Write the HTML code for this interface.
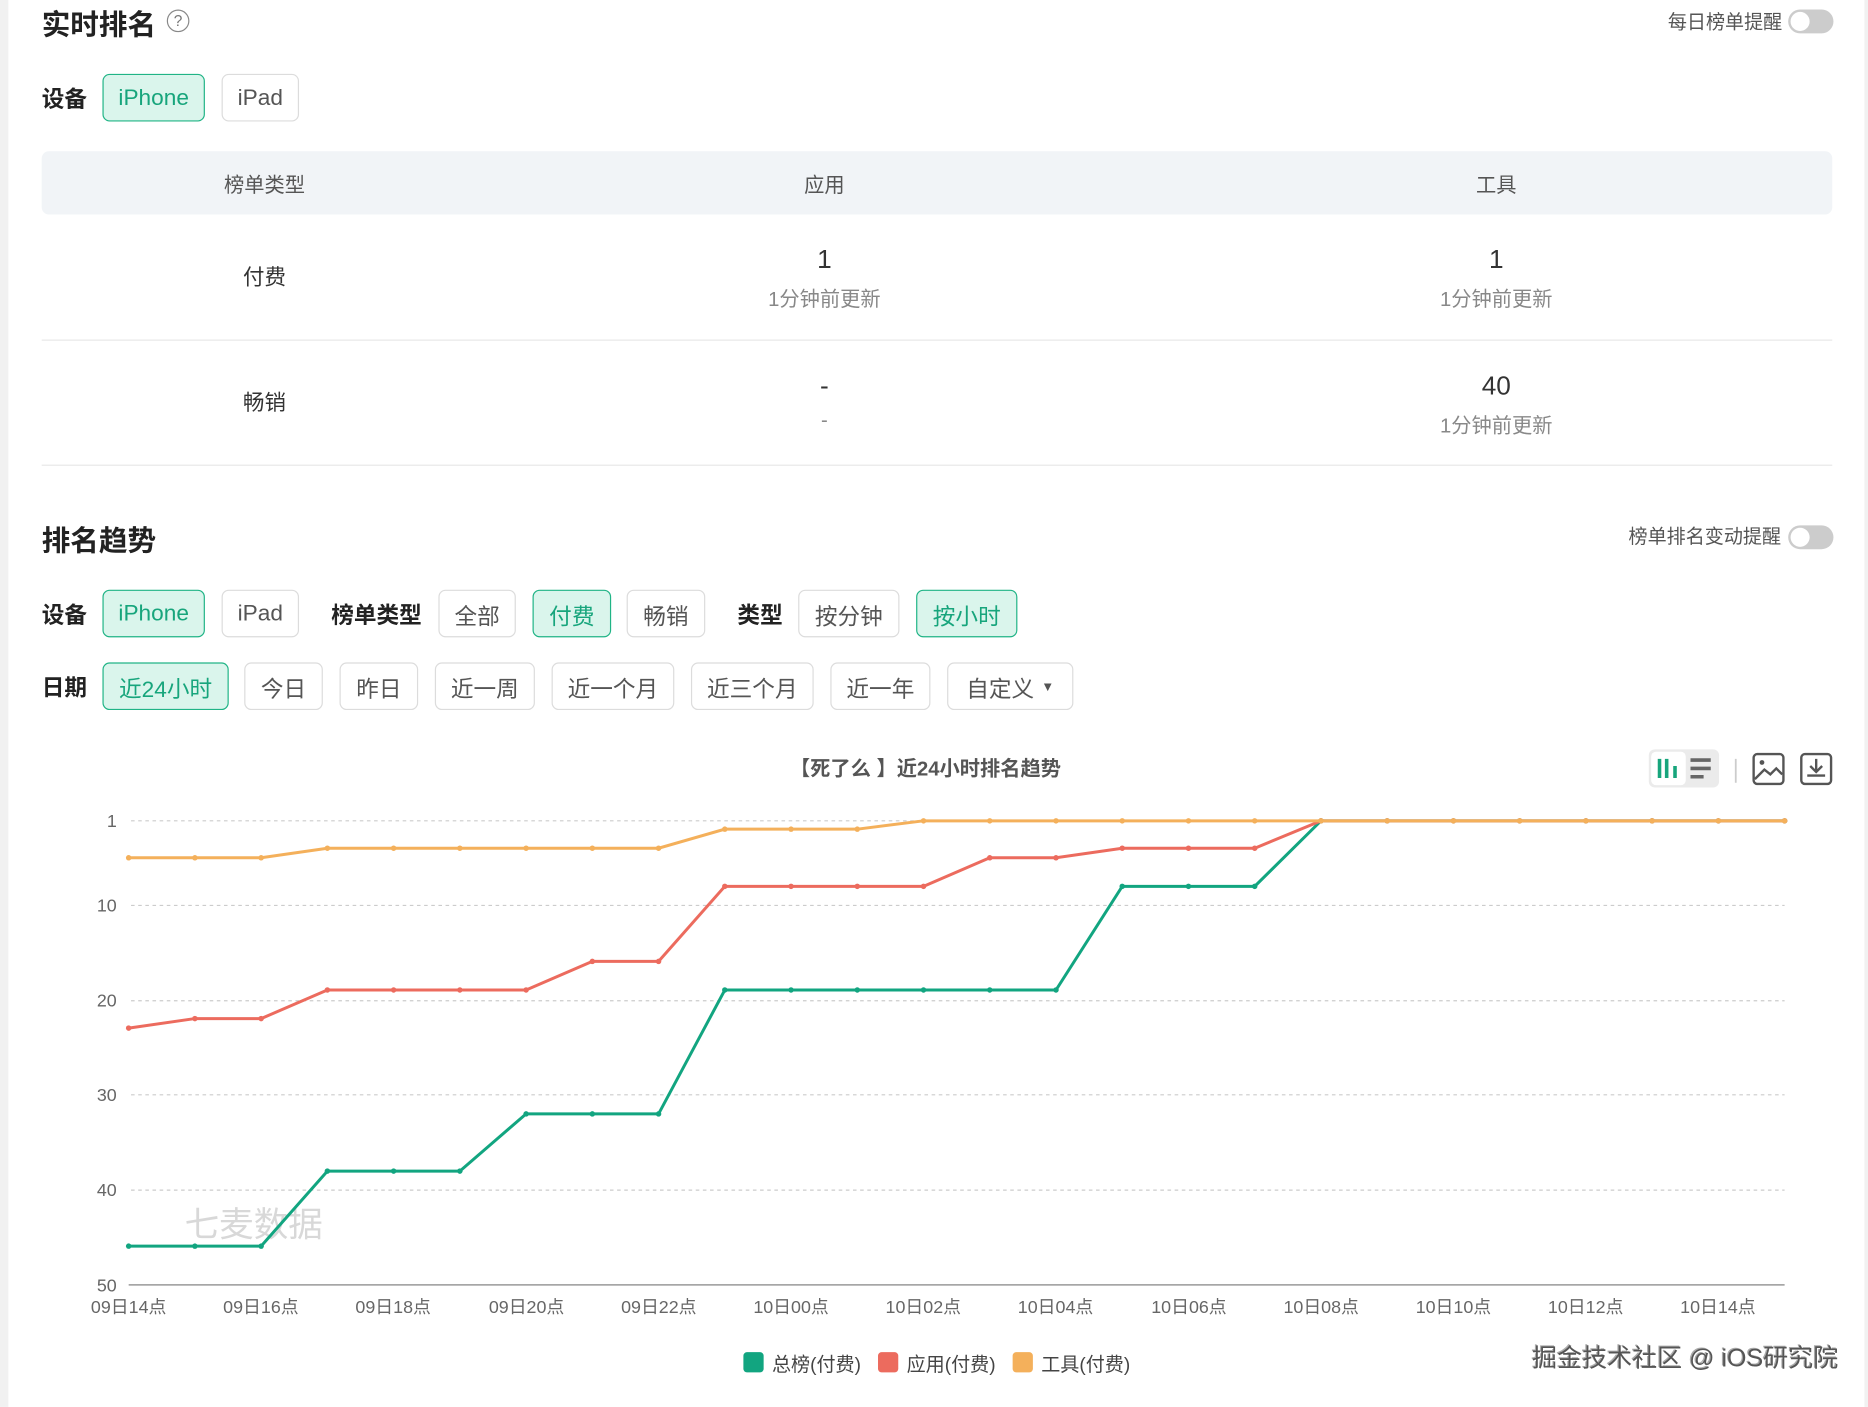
<!DOCTYPE html>
<html><head><meta charset="utf-8"><style>
html,body{margin:0;padding:0;background:#fff;width:1868px;height:1406px;overflow:hidden}
#w{position:absolute;left:0;top:0;width:1568px;height:1181px;transform:scale(1.19133);transform-origin:0 0;font-family:"Liberation Sans","Noto Sans CJK SC",sans-serif;color:#333}
.a{position:absolute;white-space:nowrap}
.h{font-size:24px;font-weight:bold;color:#222}
.lb{font-size:19px;font-weight:bold;color:#222}
.b{position:absolute;border:1px solid #dcdcdc;border-radius:6px;font-size:19px;color:#555;display:flex;align-items:center;justify-content:center;box-sizing:border-box;height:40px;padding-top:2px}
.on{background:#daf5ec;border-color:#20b486;color:#17a57c}
.tg{position:absolute;width:38px;height:20px;border-radius:10px;background:#ccc}
.tg:after{content:"";position:absolute;left:2px;top:2px;width:16px;height:16px;border-radius:50%;background:#fff}
.c{position:absolute;text-align:center;transform:translateX(-50%);white-space:nowrap}
</style></head><body><div id="w">
<div class="a" style="left:0;top:0;width:7px;height:1181px;background:#f1f1f1"></div>
<div class="a" style="left:1565px;top:0;width:3px;height:1181px;background:#f1f1f1"></div>

<div class="a h" style="left:35px;top:1px">实时排名</div>
<div class="a" style="left:140px;top:8px;width:17px;height:17px;border:1px solid #888;border-radius:50%;font-size:13px;color:#777;text-align:center;line-height:17px">?</div>
<div class="a" style="left:1400px;top:5px;font-size:16px;color:#555">每日榜单提醒</div>
<div class="tg" style="left:1501px;top:8px"></div>

<div class="a lb" style="left:35px;top:69px">设备</div>
<div class="b on" style="left:86px;top:62px;width:86px">iPhone</div>
<div class="b" style="left:186px;top:62px;width:65px">iPad</div>

<div class="a" style="left:35px;top:127px;width:1503px;height:53px;background:#f1f4f7;border-radius:6px"></div>
<div class="c" style="left:222px;top:141px;font-size:17px;color:#555">榜单类型</div>
<div class="c" style="left:692px;top:141px;font-size:17px;color:#555">应用</div>
<div class="c" style="left:1256px;top:141px;font-size:17px;color:#555">工具</div>

<div class="c" style="left:222px;top:219px;font-size:18px">付费</div>
<div class="c" style="left:692px;top:205px;font-size:22px">1</div>
<div class="c" style="left:692px;top:237px;font-size:17px;color:#888">1分钟前更新</div>
<div class="c" style="left:1256px;top:205px;font-size:22px">1</div>
<div class="c" style="left:1256px;top:237px;font-size:17px;color:#888">1分钟前更新</div>
<div class="a" style="left:35px;top:285px;width:1503px;height:1px;background:#e8e8e8"></div>
<div class="c" style="left:222px;top:324px;font-size:18px">畅销</div>
<div class="c" style="left:692px;top:311px;font-size:22px">-</div>
<div class="c" style="left:692px;top:343px;font-size:17px;color:#888">-</div>
<div class="c" style="left:1256px;top:311px;font-size:22px">40</div>
<div class="c" style="left:1256px;top:343px;font-size:17px;color:#888">1分钟前更新</div>
<div class="a" style="left:35px;top:390px;width:1503px;height:1px;background:#e8e8e8"></div>

<div class="a h" style="left:35px;top:434px">排名趋势</div>
<div class="a" style="left:1367px;top:437px;font-size:16px;color:#555">榜单排名变动提醒</div>
<div class="tg" style="left:1501px;top:441px"></div>

<div class="a lb" style="left:35px;top:502px">设备</div>
<div class="b on" style="left:86px;top:495px;width:86px">iPhone</div>
<div class="b" style="left:186px;top:495px;width:65px">iPad</div>
<div class="a lb" style="left:278px;top:502px">榜单类型</div>
<div class="b" style="left:368px;top:495px;width:65px">全部</div>
<div class="b on" style="left:447px;top:495px;width:66px">付费</div>
<div class="b" style="left:526px;top:495px;width:66px">畅销</div>
<div class="a lb" style="left:619px;top:502px">类型</div>
<div class="b" style="left:670px;top:495px;width:85px">按分钟</div>
<div class="b on" style="left:769px;top:495px;width:85px">按小时</div>

<div class="a lb" style="left:35px;top:563px">日期</div>
<div class="b on" style="left:86px;top:556px;width:106px">近24小时</div>
<div class="b" style="left:205px;top:556px;width:66px">今日</div>
<div class="b" style="left:285px;top:556px;width:66px">昨日</div>
<div class="b" style="left:365px;top:556px;width:84px">近一周</div>
<div class="b" style="left:463px;top:556px;width:103px">近一个月</div>
<div class="b" style="left:580px;top:556px;width:103px">近三个月</div>
<div class="b" style="left:697px;top:556px;width:84px">近一年</div>
<div class="b" style="left:795px;top:556px;width:106px">自定义 <span style="font-size:11px;margin-left:6px">▼</span></div>

<div class="a" style="left:663px;top:631px;font-size:17px;font-weight:bold;color:#555">【死了么 】近24小时排名趋势</div>
<div class="a" style="left:1384px;top:629px;width:59px;height:32px;background:#ebebeb;border-radius:5px"></div>
<div class="a" style="left:1386px;top:631px;width:29px;height:28px;background:#fff;border-radius:4px"></div>
<svg class="a" style="left:1380px;top:625px" width="170" height="42" viewBox="0 0 170 42">
<g stroke="#17a57c" stroke-width="3"><line x1="13" y1="12" x2="13" y2="28"/><line x1="19" y1="12" x2="19" y2="28"/><line x1="26" y1="18" x2="26" y2="28"/></g>
<g stroke="#666" stroke-width="3"><line x1="39" y1="13" x2="56" y2="13"/><line x1="39" y1="20" x2="56" y2="20"/><line x1="39" y1="27" x2="50" y2="27"/></g>
<line x1="77" y1="12" x2="77" y2="32" stroke="#ccc" stroke-width="1.5"/>
<rect x="92" y="8" width="25" height="25" rx="3" fill="none" stroke="#555" stroke-width="2"/>
<circle cx="99" cy="15" r="2" fill="#555"/>
<path d="M93 29 L101 21 L106 25 L111 20 L116 25" fill="none" stroke="#555" stroke-width="2"/>
<rect x="132" y="8" width="25" height="25" rx="3" fill="none" stroke="#555" stroke-width="2"/>
<path d="M144.5 12 V23 M139.5 18 L144.5 23 L149.5 18 M137 26 H152" fill="none" stroke="#555" stroke-width="2"/>
</svg>

<svg class="a" style="left:0;top:670px" width="1568" height="450" viewBox="0 670 1568 450">
<defs>
<marker id="mg" markerWidth="6" markerHeight="6" refX="3" refY="3" markerUnits="userSpaceOnUse"><circle cx="3" cy="3" r="2.3" fill="#12a580"/></marker>
<marker id="mr" markerWidth="6" markerHeight="6" refX="3" refY="3" markerUnits="userSpaceOnUse"><circle cx="3" cy="3" r="2.3" fill="#ec6b5e"/></marker>
<marker id="mo" markerWidth="6" markerHeight="6" refX="3" refY="3" markerUnits="userSpaceOnUse"><circle cx="3" cy="3" r="2.3" fill="#f4b05b"/></marker>
</defs>
<g stroke="#ccc" stroke-dasharray="3,3" stroke-width="1">
<line x1="110" y1="689" x2="1498" y2="689"/><line x1="110" y1="760" x2="1498" y2="760"/><line x1="110" y1="840" x2="1498" y2="840"/><line x1="110" y1="919" x2="1498" y2="919"/><line x1="110" y1="999" x2="1498" y2="999"/>
</g>
<line x1="108" y1="1078.5" x2="1498" y2="1078.5" stroke="#999" stroke-width="1.2"/>
<g font-size="15" fill="#666" text-anchor="end" font-family="Liberation Sans,sans-serif">
<text x="98" y="694">1</text><text x="98" y="765">10</text><text x="98" y="845">20</text><text x="98" y="924">30</text><text x="98" y="1004">40</text><text x="98" y="1084">50</text>
</g>
<g font-size="15" fill="#666" text-anchor="middle" font-family="Liberation Sans,Noto Sans CJK SC,sans-serif">
<text x="108" y="1102">09日14点</text><text x="219" y="1102">09日16点</text><text x="330" y="1102">09日18点</text><text x="442" y="1102">09日20点</text><text x="553" y="1102">09日22点</text><text x="664" y="1102">10日00点</text><text x="775" y="1102">10日02点</text><text x="886" y="1102">10日04点</text><text x="998" y="1102">10日06点</text><text x="1109" y="1102">10日08点</text><text x="1220" y="1102">10日10点</text><text x="1331" y="1102">10日12点</text><text x="1442" y="1102">10日14点</text>
</g>
<text x="155" y="1038" font-size="29" fill="#d8d8d8" font-family="Liberation Sans,Noto Sans CJK SC,sans-serif" font-weight="normal">七麦数据</text>
<polyline fill="none" stroke="#12a580" stroke-width="2.5" marker-start="url(#mg)" marker-mid="url(#mg)" marker-end="url(#mg)" points="108,1046 163.6,1046 219.2,1046 274.8,983 330.4,983 386,983 441.6,935 497.2,935 552.8,935 608.4,831 664,831 719.6,831 775.2,831 830.8,831 886.4,831 942,744 997.6,744 1053.2,744 1108.8,689 1164.4,689 1220,689 1275.6,689 1331.2,689 1386.8,689 1442.4,689 1498,689"/>
<polyline fill="none" stroke="#ec6b5e" stroke-width="2.5" marker-start="url(#mr)" marker-mid="url(#mr)" marker-end="url(#mr)" points="108,863 163.6,855 219.2,855 274.8,831 330.4,831 386,831 441.6,831 497.2,807 552.8,807 608.4,744 664,744 719.6,744 775.2,744 830.8,720 886.4,720 942,712 997.6,712 1053.2,712 1108.8,689 1164.4,689 1220,689 1275.6,689 1331.2,689 1386.8,689 1442.4,689 1498,689"/>
<polyline fill="none" stroke="#f4b05b" stroke-width="2.5" marker-start="url(#mo)" marker-mid="url(#mo)" marker-end="url(#mo)" points="108,720 163.6,720 219.2,720 274.8,712 330.4,712 386,712 441.6,712 497.2,712 552.8,712 608.4,696 664,696 719.6,696 775.2,689 830.8,689 886.4,689 942,689 997.6,689 1053.2,689 1108.8,689 1164.4,689 1220,689 1275.6,689 1331.2,689 1386.8,689 1442.4,689 1498,689"/>
</svg>

<div class="a" style="left:624px;top:1135px;width:17px;height:17px;border-radius:3px;background:#12a580"></div>
<div class="a" style="left:648px;top:1132px;font-size:16px;color:#444">总榜(付费)</div>
<div class="a" style="left:737px;top:1135px;width:17px;height:17px;border-radius:3px;background:#ec6b5e"></div>
<div class="a" style="left:761px;top:1132px;font-size:16px;color:#444">应用(付费)</div>
<div class="a" style="left:850px;top:1135px;width:17px;height:17px;border-radius:3px;background:#f4b05b"></div>
<div class="a" style="left:874px;top:1132px;font-size:16px;color:#444">工具(付费)</div>

<div class="a" style="left:1286px;top:1124px;font-size:21px;color:#555;font-weight:normal;text-shadow:1px 1px 0 #fff,-1px -1px 0 #aaa">掘金技术社区 @ iOS研究院</div>
</div></body></html>
